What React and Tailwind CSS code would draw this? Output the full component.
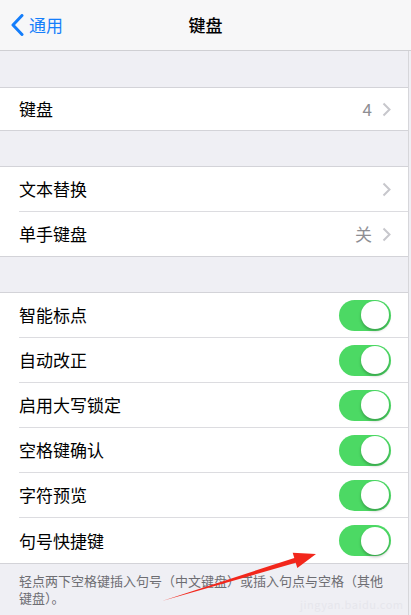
import React from "react";

const font = { fontFamily: '"Noto Sans CJK SC", "Noto Sans", sans-serif' };

const Chevron = () => (
  <svg width="9" height="15" viewBox="0 0 9 15" className="ml-[10px]">
    <path d="M1.5 1.5 L7.5 7.5 L1.5 13.5" fill="none" stroke="#c7c7cc" strokeWidth="2" />
  </svg>
);

const Toggle = () => (
  <div className="w-[52px] h-[31px] rounded-full bg-[#4cd964] relative">
    <div className="absolute right-[2px] top-[1.5px] w-[28px] h-[28px] rounded-full bg-white shadow-[0_2px_3px_rgba(0,0,0,0.25)]" />
  </div>
);

const Row = ({ label, value, chevron, toggle, last, h = "h-[45px]" }) => (
  <div className={`flex items-center ${h} pl-[19px]`}>
    <div className={`flex flex-1 items-center h-full pr-[17px] ${last ? "" : "border-b border-[#dcdce0]"}`}>
      <span className="flex-1 text-[17px] text-black">{label}</span>
      {value && <span className="text-[17px] text-[#8e8e93]">{value}</span>}
      {chevron && <Chevron />}
      {toggle && <Toggle />}
    </div>
  </div>
);

const Group = ({ children }) => (
  <div className="bg-white border-y border-[#d3d3d8]">{children}</div>
);

export default function App() {
  return (
    <div style={font} className="relative w-[411px] h-[615px] bg-[#efeff4] overflow-hidden">
      {/* nav */}
      <div className="h-[51px] bg-[#f7f7f8] border-b border-[#cfcfd3] flex items-center relative">
        <div className="flex items-center pl-[11px] text-[#157efb]">
          <svg width="13" height="22" viewBox="0 0 13 22">
            <path d="M11 1.5 L2 11 L11 20.5" fill="none" stroke="#157efb" strokeWidth="3" strokeLinecap="round" strokeLinejoin="round" />
          </svg>
          <span className="ml-[5px] text-[17px]">通用</span>
        </div>
        <div className="absolute left-0 right-0 text-center text-[17px] font-medium text-black pointer-events-none">键盘</div>
      </div>

      <div className="mr-[2px] border-r border-[#d6d6da]">
        <div className="h-[36px]" />
        <Group>
          <Row label="键盘" value="4" chevron last h="h-[42px]" />
        </Group>
        <div className="h-[35px]" />
        <Group>
          <Row label="文本替换" chevron />
          <Row label="单手键盘" value="关" chevron last h="h-[44px]" />
        </Group>
        <div className="h-[35px]" />
        <Group>
          <Row label="智能标点" toggle />
          <Row label="自动改正" toggle />
          <Row label="启用大写锁定" toggle />
          <Row label="空格键确认" toggle />
          <Row label="字符预览" toggle />
          <Row label="句号快捷键" toggle last />
        </Group>
        <p className="px-[19px] pt-[8px] text-[13px] leading-[17px] text-[#6d6d72] h-[60px]">
          轻点两下空格键插入句号（中文键盘）或插入句点与空格（其他键盘）。
        </p>
      </div>

      {/* watermark */}
      <div className="absolute left-[300px] top-[598px] text-[11px] leading-[13px] text-[#e6e6ec] tracking-[0.5px]">jingyan.baidu.com</div>

      {/* annotation arrow */}
      <svg className="absolute left-0 top-0 pointer-events-none" width="411" height="615">
        <polygon points="162,601 294.3,558 292.7,552.8 316,554 297.3,568 295.7,562.8" fill="#f2271c" />
      </svg>
    </div>
  );
}
